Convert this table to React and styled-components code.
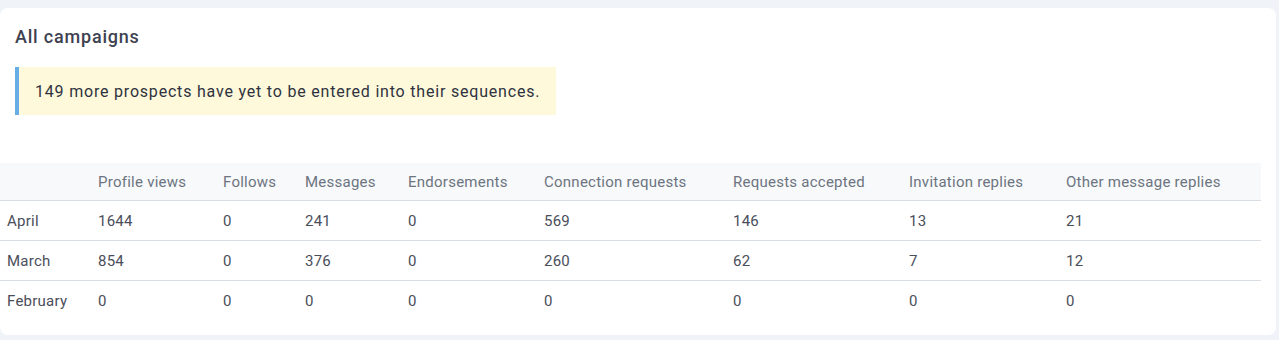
import React from "react";
import styled, { createGlobalStyle } from "styled-components";

const Global = createGlobalStyle`
  html, body { margin: 0; padding: 0; background: #f0f4f8; }
  body { font-family: Roboto, "Liberation Sans", Arial, sans-serif; }
`;

const Page = styled.div`
  padding: 8px 3px 0 0;
  height: 340px;
  box-sizing: border-box;
`;

const Card = styled.section`
  background: #ffffff;
  border-radius: 8px;
  padding: 15px 15px 15px 15px;
  box-sizing: border-box;
  height: 327px;
`;

const Title = styled.h2`
  margin: 2px 0 0 0;
  font-size: 18px;
  line-height: 24px;
  font-weight: 500;
  color: #3d4150;
  letter-spacing: 0.8px;
`;

const Alert = styled.div`
  margin-top: 18px;
  display: inline-flex;
  align-items: center;
  height: 48px;
  box-sizing: border-box;
  padding: 0 16px 0 16px;
  background: #fef9db;
  border-left: 4px solid #68aee6;
  font-size: 16px;
  color: #2f3340;
  letter-spacing: 0.8px;
`;

const Table = styled.table`
  margin: 48px 0 0 -15px;
  width: 1261px;
  border-collapse: collapse;
  table-layout: fixed;
  font-size: 15px;
  letter-spacing: 0.25px;
`;

const HeadRow = styled.tr`
  background: #f7f9fb;
  border-bottom: 1px solid #d9dee5;
`;

const Th = styled.th`
  height: 37px;
  padding: 0 7px;
  text-align: left;
  font-weight: 400;
  color: #6d7480;
  white-space: nowrap;
`;

const Row = styled.tr`
  border-bottom: ${(p) => (p.$last ? "none" : "1px solid #d9dee5")};
`;

const Td = styled.td`
  height: 39px;
  padding: 0 7px;
  color: #4a4e5a;
  white-space: nowrap;
`;

const widths = [91, 125, 82, 103, 136, 189, 176, 157, 202];
const headers = [
  "",
  "Profile views",
  "Follows",
  "Messages",
  "Endorsements",
  "Connection requests",
  "Requests accepted",
  "Invitation replies",
  "Other message replies",
];
const rows = [
  ["April", 1644, 0, 241, 0, 569, 146, 13, 21],
  ["March", 854, 0, 376, 0, 260, 62, 7, 12],
  ["February", 0, 0, 0, 0, 0, 0, 0, 0],
];

export default function App() {
  return (
    <Page>
      <Global />
      <Card>
        <Title>All campaigns</Title>
        <Alert>149 more prospects have yet to be entered into their sequences.</Alert>
        <Table>
          <colgroup>
            {widths.map((w, i) => (
              <col key={i} style={{ width: w }} />
            ))}
          </colgroup>
          <thead>
            <HeadRow>
              {headers.map((h, i) => (
                <Th key={i}>{h}</Th>
              ))}
            </HeadRow>
          </thead>
          <tbody>
            {rows.map((r, i) => (
              <Row key={i} $last={i === rows.length - 1}>
                {r.map((c, j) => (
                  <Td key={j}>{c}</Td>
                ))}
              </Row>
            ))}
          </tbody>
        </Table>
      </Card>
    </Page>
  );
}
